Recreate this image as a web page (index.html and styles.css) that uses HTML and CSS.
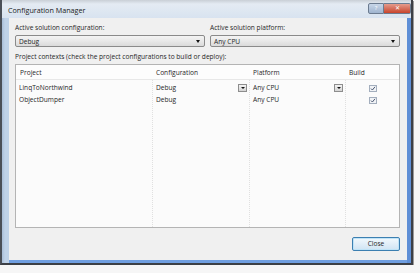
FILE: index.html
```html
<!doctype html>
<html lang="en">
<head>
    <meta charset="UTF-8">
    <title>Configuration Manager</title>
    <link rel="stylesheet" href="styles.css">
</head>
<body>
<div class="window">
    <div class="titlebar">
        <span class="title">Configuration Manager</span>
        <div class="caption-btns">
            <span class="cbtn help">?</span>
            <span class="cbtn close">&#x2715;</span>
        </div>
    </div>
    <div class="client">
        <div class="top">
            <div class="field">
                <div class="label">Active solution configuration:</div>
                <div class="combo"><span>Debug</span><i class="arrow"></i></div>
            </div>
            <div class="field">
                <div class="label">Active solution platform:</div>
                <div class="combo"><span>Any CPU</span><i class="arrow"></i></div>
            </div>
        </div>
        <div class="label ctx">Project contexts (check the project configurations to build or deploy):</div>
        <div class="grid">
            <div class="ghead">
                <div class="hcell">Project</div>
                <div class="hcell">Configuration</div>
                <div class="hcell">Platform</div>
                <div class="hcell">Build</div>
            </div>
            <div class="gbody">
                <div class="col">
                    <div class="cell">LinqToNorthwind</div>
                    <div class="cell">ObjectDumper</div>
                </div>
                <div class="col sep">
                    <div class="cell">Debug<span class="ddbtn"><i class="arrow"></i></span></div>
                    <div class="cell">Debug</div>
                </div>
                <div class="col sep">
                    <div class="cell">Any CPU<span class="ddbtn"><i class="arrow"></i></span></div>
                    <div class="cell">Any CPU</div>
                </div>
                <div class="col sep">
                    <div class="cell center">
                        <svg class="check" width="8" height="7" viewBox="0 0 8 7"><rect x="0.5" y="0.5" width="7" height="6" fill="#f1f3f6" stroke="#a3aebd"/><path d="M2 3.6 L3.4 5 L6 1.8" fill="none" stroke="#4b5872" stroke-width="1"/></svg>
                    </div>
                    <div class="cell center">
                        <svg class="check" width="8" height="7" viewBox="0 0 8 7"><rect x="0.5" y="0.5" width="7" height="6" fill="#f1f3f6" stroke="#a3aebd"/><path d="M2 3.6 L3.4 5 L6 1.8" fill="none" stroke="#4b5872" stroke-width="1"/></svg>
                    </div>
                </div>
            </div>
        </div>
        <div class="buttons">
            <div class="button">Close</div>
        </div>
    </div>
</div>
</body>
</html>
```

FILE: styles.css
```css
html, body {
    margin: 0;
    padding: 0;
    background: #f6f6f6;
    font-family: "Open Sans", "Noto Sans", sans-serif;
    color: #262626;
}

.window {
    width: 413px;
    height: 265px;
    box-sizing: border-box;
    display: flex;
    flex-direction: column;
    padding: 0 4px 4px 7px;
    background: linear-gradient(90deg, #a9bed8 0, #bfd2e8 3px, #bfd2e8 97%, #5f8fd6 99%);
    border-left: 2px solid #4a4f57;
    border-right: 2px solid #3c3f45;
    border-bottom: 2px solid #3c3f45;
    box-shadow: 1px 1px 0 #9a9a9a;
}

.titlebar {
    height: 18px;
    margin: 0 -4px 0 -7px;
    padding: 2px 0 0 6px;
    box-sizing: border-box;
    display: flex;
    align-items: center;
    background: linear-gradient(#c9cfd6, #e4ebf3 4px, #d8e3f0);
}

.title {
    font-size: 7.2px;
    color: #1a1a1a;
}

.caption-btns {
    margin-left: auto;
    align-self: flex-start;
    margin-top: 1px;
    display: flex;
}

.cbtn {
    height: 9px;
    font-size: 6px;
    line-height: 9px;
    text-align: center;
    color: #fff;
    border: 1px solid #6b7b90;
}

.help {
    width: 14px;
    background: linear-gradient(#c8d6e8, #9fb4cf);
    border-radius: 2px 0 0 2px;
}

.close {
    width: 26px;
    background: linear-gradient(#e49b8c, #c8442c);
    border-left: none;
    border-radius: 0 2px 2px 0;
}

.client {
    flex: 1;
    background: #f0f0f0;
    padding: 5px 7px 0 6px;
    display: flex;
    flex-direction: column;
    border-bottom: 3px solid #6f9ee0;
    margin-bottom: -4px;
}

.top {
    display: grid;
    grid-template-columns: 1fr 1fr;
    column-gap: 5px;
}

.label {
    font-size: 6.6px;
    height: 10px;
    line-height: 10px;
}

.combo {
    margin-top: 2px;
    height: 12px;
    box-sizing: border-box;
    border: 1px solid #8a8a8a;
    border-radius: 2px;
    background: linear-gradient(#f4f4f4, #e8e8e8 50%, #dadada);
    display: flex;
    align-items: center;
    padding: 0 4px 0 3px;
    font-size: 6.6px;
}

.arrow {
    margin-left: auto;
    width: 0;
    height: 0;
    border-left: 2.5px solid transparent;
    border-right: 2.5px solid transparent;
    border-top: 3px solid #111;
}

.ctx {
    margin-top: 5px;
}

.grid {
    margin-top: 2px;
    height: 164px;
    box-sizing: border-box;
    border: 1px solid #b4b4b4;
    background: #fbfbfb;
    display: flex;
    flex-direction: column;
}

.ghead, .gbody {
    display: grid;
    grid-template-columns: 136px 97px 96px 1fr;
}

.ghead {
    height: 14px;
    border-bottom: 1px solid #e8e8e8;
    background: #fdfdfd;
}

.hcell {
    font-size: 6.6px;
    line-height: 16px;
    padding-left: 4px;
}

.gbody {
    flex: 1;
}

.col {
    padding-top: 2px;
}

.col.sep {
    border-left: 1px dotted #e0e0e0;
}

.cell {
    height: 12px;
    line-height: 12px;
    font-size: 6.6px;
    padding-left: 3px;
    display: flex;
    align-items: center;
}

.cell.center {
    justify-content: center;
    padding-left: 0;
}

.ddbtn {
    margin-left: auto;
    margin-right: 2px;
    width: 9px;
    height: 8px;
    box-sizing: border-box;
    border: 1px solid #8d8d8d;
    background: linear-gradient(#f4f4f4, #d4d4d4);
    display: flex;
    align-items: center;
    justify-content: center;
}

.ddbtn .arrow {
    margin: 0;
    border-left-width: 2px;
    border-right-width: 2px;
    border-top-width: 2px;
}

.buttons {
    display: flex;
    justify-content: flex-end;
    margin-top: 9px;
}

.button {
    width: 48px;
    height: 14px;
    box-sizing: border-box;
    border: 1px solid #3c7fb1;
    border-radius: 2px;
    background: linear-gradient(#f2f9fd, #e1eef8 50%, #cfe4f3);
    box-shadow: inset 0 0 0 1px #bfe3f7;
    font-size: 6.6px;
    line-height: 12px;
    text-align: center;
}
```
